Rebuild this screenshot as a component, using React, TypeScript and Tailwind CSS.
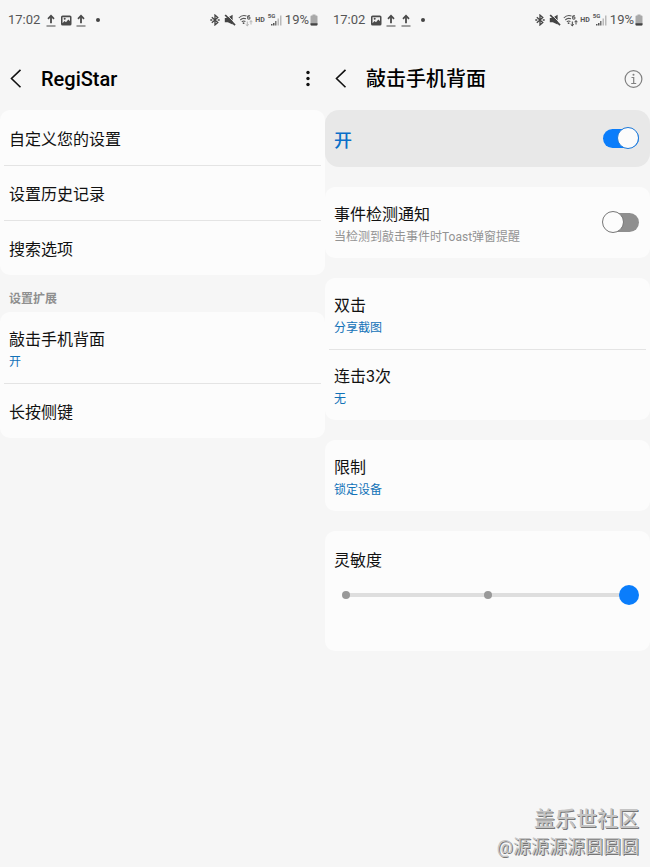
import { useId, useState } from "react";
import type { ReactNode } from "react";

function UploadIcon() {
  return (
    <svg width="12" height="13" viewBox="0 0 12 13" fill="none" stroke="#4a4a4a">
      <path d="M6 9.300V2.200" strokeWidth="1.800" />
      <path d="M3 4.800 6 1.700l3 3.100" strokeWidth="1.700" />
      <path d="M1.500 12h9" strokeWidth="1" />
    </svg>
  );
}

function PictureIcon() {
  return (
    <svg width="12" height="13" viewBox="0 0 12 13">
      <rect x="1" y="1.500" width="10.500" height="10" rx="1.600" fill="#4a4a4a" />
      <path d="M2.500 3.300h7.500v3.900L8.300 5.400 6 8.200 4.500 7 2.500 9.200z" fill="#f0f0f0" />
      <circle cx="4.700" cy="4.800" r="1" fill="#4a4a4a" />
    </svg>
  );
}

function BluetoothIcon() {
  return (
    <svg width="10" height="12" viewBox="0 0 10 12" fill="none" stroke="#444" strokeWidth="1.300">
      <path d="m1.800 3.200 6 5.200L5 10.900V1.100l2.800 2.500L1.800 8.800" />
      <path d="M.3 6h2M7.700 6h2" strokeWidth="1.600" />
    </svg>
  );
}

function MutedIcon() {
  return (
    <svg width="12" height="12" viewBox="0 0 12 12">
      <path d="M.8 4h2.400L8.600.8v9.800L3.800 8.200H.8z" fill="#444" />
      <path d="m2.600.4 9.200 9.600" stroke="#f6f6f6" strokeWidth=".9" />
      <path d="m1.200 1 9.800 10.200" stroke="#444" strokeWidth="1.700" />
    </svg>
  );
}

function WifiIcon({ active }: { active: boolean }) {
  return (
    <svg width="15" height="13" viewBox="0 0 15 13" fill="none" stroke="#555">
      <path d="M.8 4C3.200 1.400 6.400 1.200 8.500 2M2.300 6C4 4.200 6 4 8 4.800M3.800 7.900C5 6.800 6.400 6.800 7.400 7.500" strokeWidth="1.100" />
      <circle cx="5.600" cy="9.200" r=".9" fill="#555" stroke="none" />
      <path d="M11.800 1.500C10.300 1.300 9.600 2.300 9.600 3.600" strokeWidth="1.100" />
      <circle cx="10.800" cy="4" r="1.200" strokeWidth="1.100" />
      <path
        d="M9.300 7.500v4.500M7.700 10.300l1.600 1.500 1.600-1.500M13 10.500V6.500M11.500 8.200 13 6.700l1.500 1.500"
        stroke={active ? "#444" : "#b5b5b5"}
      />
    </svg>
  );
}

function SignalIcon() {
  return (
    <span className="relative h-3 w-[13px]">
      <svg width="13" height="12" viewBox="0 0 13 12" className="block">
        <path d="M2 11.500v-1.500h1.500v1.500zM4 11.500V9h1.500v2.500z" fill="#555" />
        <path d="M6 7h1.500v4.500H6z" fill="#777" />
        <path d="M8.500 4.500H10v7H8.500zM11 1.500h1.500v10H11z" fill="#b9b9b9" />
      </svg>
      <span className="absolute -top-px -left-px text-[6px] leading-[6px] font-bold">5G</span>
    </span>
  );
}

function BatteryIcon() {
  return (
    <svg width="8" height="12" viewBox="0 0 8 12">
      <path d="M2.500.5h3v1H6.500a1 1 0 0 1 1 1v8a1 1 0 0 1-1 1h-5a1 1 0 0 1-1-1v-8a1 1 0 0 1 1-1h1z" fill="#a9a9a9" />
      <path d="M.5 9.200h7v1.300a1 1 0 0 1-1 1h-5a1 1 0 0 1-1-1z" fill="#444" />
    </svg>
  );
}

function StatusBar({ notices, wifiActive = false }: { notices: ReactNode; wifiActive?: boolean }) {
  return (
    <div className="flex h-10 items-center justify-between pr-[7px] pl-2 text-[13px] leading-4 text-[#555]">
      <div className="flex items-center gap-[3px]">
        <span className="mr-0.5">17:02</span>
        {notices}
        <span className="ml-1.5 size-1 rounded-full bg-[#444]" />
      </div>
      <div className="flex items-center">
        <BluetoothIcon />
        <span className="ml-1 flex"><MutedIcon /></span>
        <span className="ml-0.5 flex"><WifiIcon active={wifiActive} /></span>
        <span className="ml-0.5 text-[7px] leading-3 font-bold">HD</span>
        <span className="ml-1 flex"><SignalIcon /></span>
        <span className="ml-[3px]">19%</span>
        <span className="ml-px flex"><BatteryIcon /></span>
      </div>
    </div>
  );
}

function Header({ title, action }: { title: string; action: ReactNode }) {
  return (
    <header className="flex h-[70px] items-center pt-2 pl-[9px]">
      <button type="button" aria-label="返回" className="flex w-8 shrink-0">
        <svg width="14" height="20" viewBox="0 0 14 20" fill="none" stroke="#111" strokeWidth="1.600">
          <path d="M11.500 .8 2.500 9.500l9 8.800" />
        </svg>
      </button>
      <h1 className="flex-1 text-xl leading-6 font-medium text-black">{title}</h1>
      {action}
    </header>
  );
}

function Card({ children, className = "" }: { children: ReactNode; className?: string }) {
  return <section className={`rounded-[10px] bg-[#fcfcfc] ${className}`}>{children}</section>;
}

function Divider() {
  return <hr className="mx-1 -mb-px border-[#e4e4e4]" />;
}

function Row({ title, value }: { title: string; value?: string }) {
  return (
    <button
      type="button"
      className={`flex w-full flex-col justify-center px-[9px] text-left ${value ? "h-[71px] pt-1" : "h-[55px] pt-1"}`}
    >
      <span className="text-base leading-5 text-[#111]">{title}</span>
      {value && <span className="mt-1 text-xs leading-4 text-[#1272b8]">{value}</span>}
    </button>
  );
}

function Switch({ id, initial }: { id: string; initial: boolean }) {
  const [on, setOn] = useState(initial);
  return (
    <input
      id={id}
      type="checkbox"
      role="switch"
      checked={on}
      onChange={(e) => setOn(e.target.checked)}
      className="relative h-[19px] w-9 shrink-0 appearance-none rounded-full bg-[#8f8f8f] before:absolute before:-top-0.5 before:-left-px before:size-[22px] before:rounded-full before:border before:border-[#777] before:bg-[#fcfcfc] checked:bg-[#0a7dfb] checked:before:left-[14px] checked:before:border-[#1c78d8]"
    />
  );
}

function Sensitivity() {
  const id = useId();
  const [level, setLevel] = useState(2);
  return (
    <Card className="h-[120px] pt-5 pr-[11px] pl-[9px]">
      <label htmlFor={id} className="block text-base leading-5 text-[#111]">灵敏度</label>
      <div className="relative mt-[14px] ml-0.5 h-5">
        <div className="absolute inset-x-[10px] top-2 flex h-1 items-center justify-between bg-[#dedede]">
          <span className="-ml-1 size-2 rounded-full bg-[#999]" />
          <span className="size-2 rounded-full bg-[#999]" />
          <span className="-mr-1 size-2 rounded-full bg-[#999]" />
        </div>
        <input
          id={id}
          type="range"
          min={0}
          max={2}
          step={1}
          value={level}
          onChange={(e) => setLevel(Number(e.target.value))}
          className="relative block h-5 w-full appearance-none bg-transparent [&::-webkit-slider-thumb]:size-5 [&::-webkit-slider-thumb]:appearance-none [&::-webkit-slider-thumb]:rounded-full [&::-webkit-slider-thumb]:bg-[#0a7dfb]"
        />
      </div>
    </Card>
  );
}

function RegiStarScreen() {
  return (
    <div>
      <StatusBar notices={<><UploadIcon /><PictureIcon /><UploadIcon /></>} />
      <Header
        title="RegiStar"
        action={
          <button type="button" aria-label="更多选项" className="mr-[14px] flex">
            <svg width="6" height="18" viewBox="0 0 6 18" fill="#111">
              <circle cx="3" cy="2.500" r="1.700" />
              <circle cx="3" cy="8.500" r="1.700" />
              <circle cx="3" cy="14.500" r="1.700" />
            </svg>
          </button>
        }
      />
      <Card>
        <Row title="自定义您的设置" />
        <Divider />
        <Row title="设置历史记录" />
        <Divider />
        <Row title="搜索选项" />
      </Card>
      <h2 className="px-[9px] pt-4 pb-[5px] text-xs leading-4 font-bold text-[#8f8f8f]">设置扩展</h2>
      <Card>
        <Row title="敲击手机背面" value="开" />
        <Divider />
        <Row title="长按侧键" />
      </Card>
    </div>
  );
}

function BackTapScreen() {
  return (
    <div>
      <StatusBar notices={<><PictureIcon /><UploadIcon /><UploadIcon /></>} wifiActive />
      <Header
        title="敲击手机背面"
        action={
          <button type="button" aria-label="信息" className="mr-[7px] flex">
            <svg width="19" height="19" viewBox="0 0 19 19" fill="none" stroke="#808080">
              <circle cx="9.500" cy="9" r="8.400" strokeWidth="1.200" />
              <path d="M7.500 7.500h2.200v6M7.200 13.500h5" strokeWidth="1.200" />
              <circle cx="9.500" cy="4.800" r="1" fill="#808080" stroke="none" />
            </svg>
          </button>
        }
      />
      <div className="flex flex-col gap-5">
        <div className="flex h-[57px] items-center justify-between rounded-[14px] bg-[#e8e8e8] pr-[11px] pl-[9px]">
          <label htmlFor="back-tap" className="pt-1 text-lg leading-6 font-medium text-[#0b6fc9]">开</label>
          <Switch id="back-tap" initial />
        </div>
        <Card className="flex h-[71px] items-center justify-between pr-[11px] pl-[9px]">
          <label htmlFor="notify" className="pt-1">
            <span className="block text-base leading-5 text-[#111]">事件检测通知</span>
            <span className="mt-1 block text-xs leading-4 text-[#939393]">当检测到敲击事件时Toast弹窗提醒</span>
          </label>
          <Switch id="notify" initial={false} />
        </Card>
        <Card>
          <Row title="双击" value="分享截图" />
          <Divider />
          <Row title="连击3次" value="无" />
        </Card>
        <Card>
          <Row title="限制" value="锁定设备" />
        </Card>
        <Sensitivity />
      </div>
    </div>
  );
}

export default function App() {
  return (
    <main className="relative min-h-screen bg-[#f6f6f6] font-[Roboto,'Noto_Sans_CJK_SC',sans-serif]">
      <div className="grid grid-cols-2">
        <RegiStarScreen />
        <BackTapScreen />
      </div>
      <div className="absolute right-[11px] bottom-1.5 text-right text-[#c4c4c4] [text-shadow:1px_1px_0_#777]">
        <p className="text-[21px] leading-7 font-medium">盖乐世社区</p>
        <p className="text-lg leading-7">@源源源源圆圆圆</p>
      </div>
    </main>
  );
}
